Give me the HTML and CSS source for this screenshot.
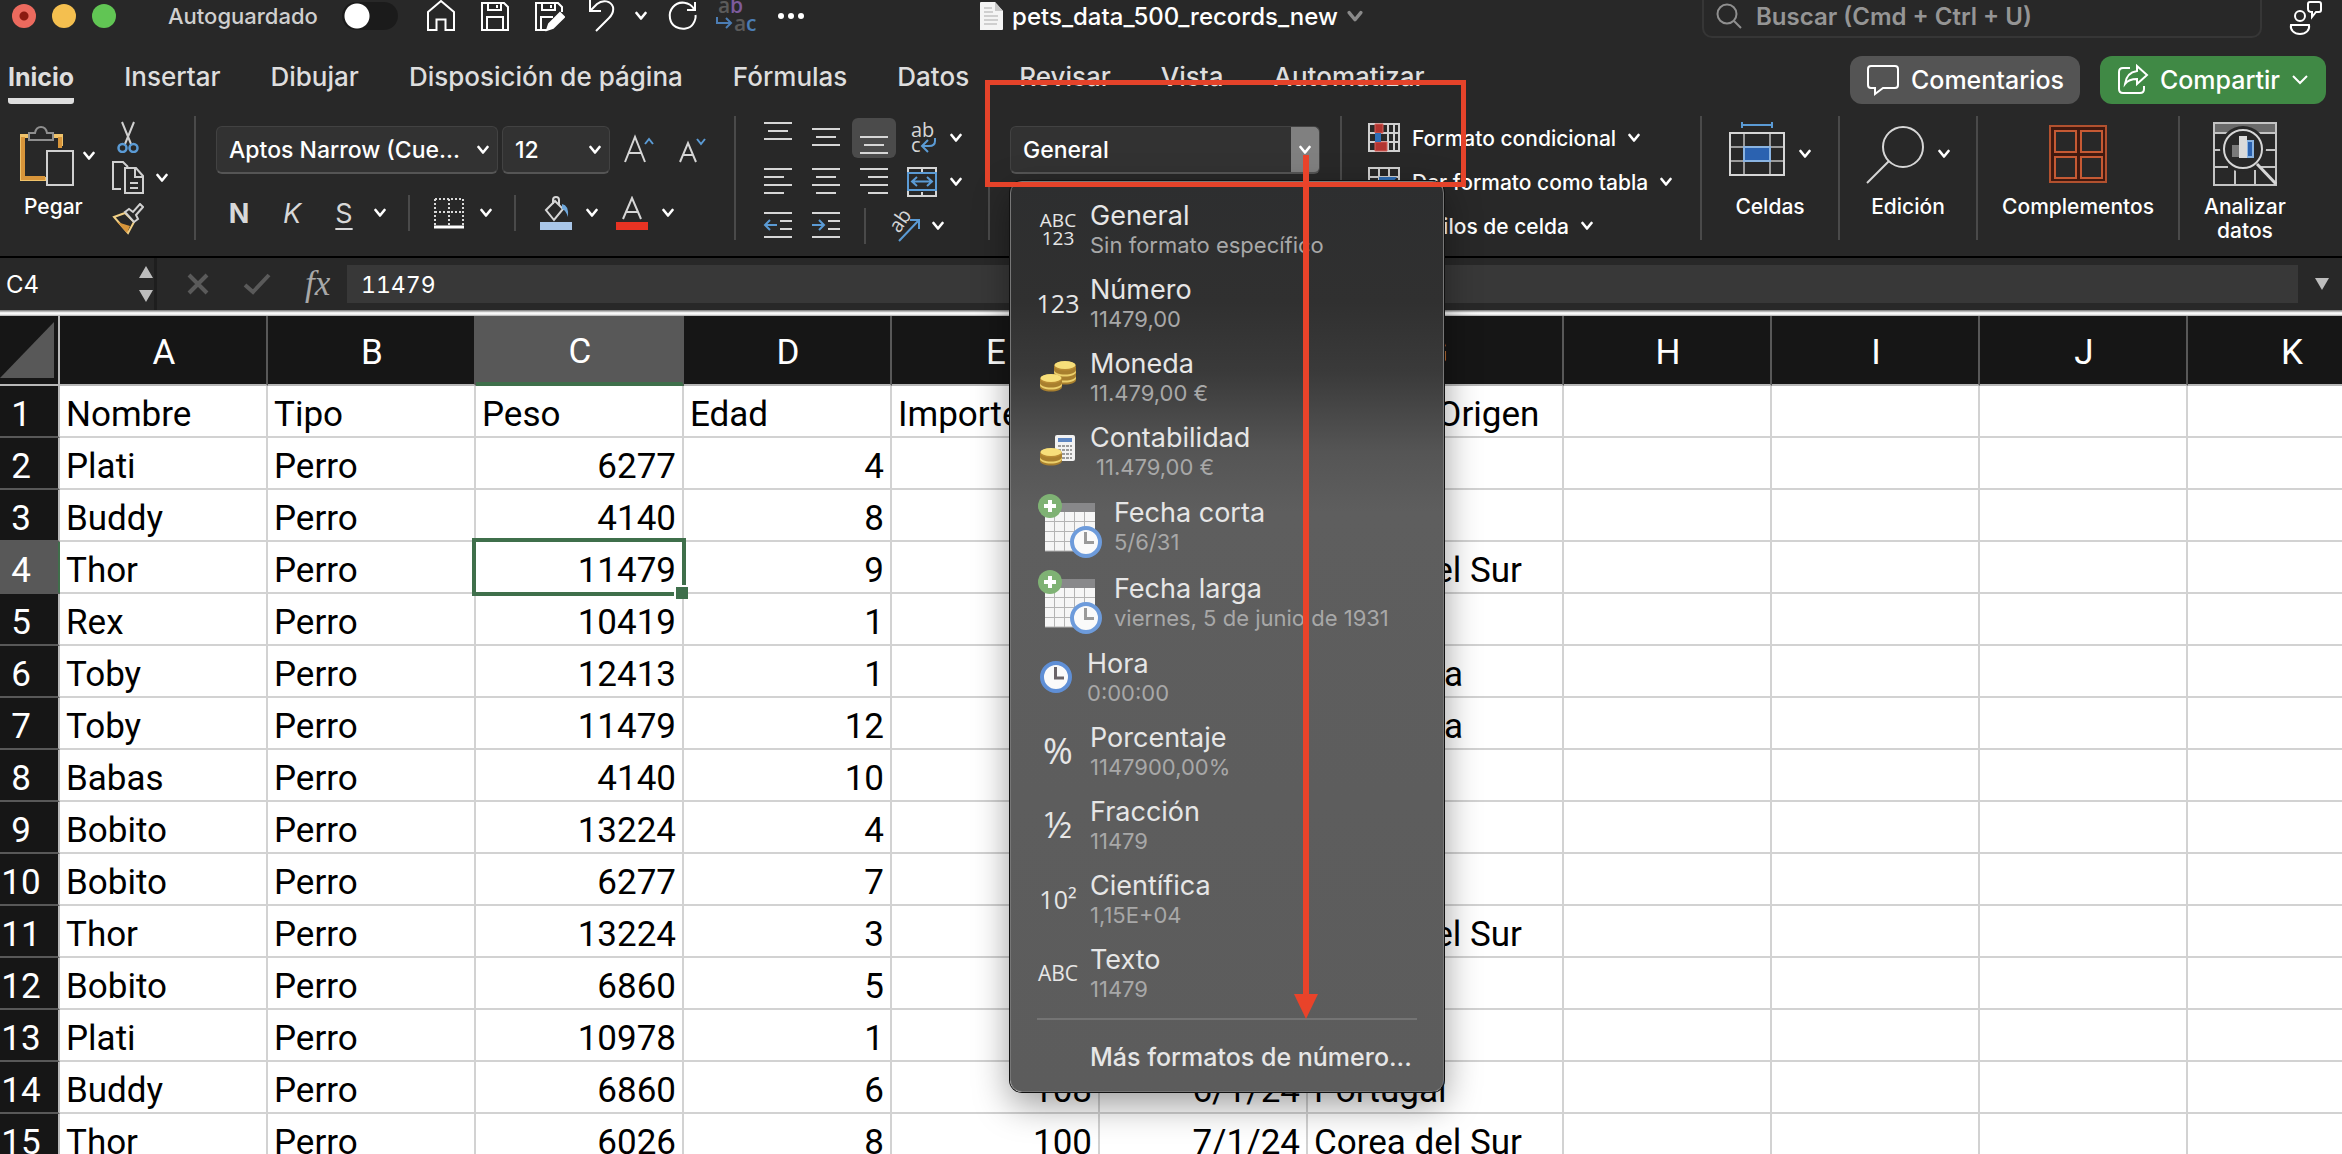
FILE: index.html
```html
<!DOCTYPE html>
<html lang="es">
<head>
<meta charset="utf-8">
<title>pets_data_500_records_new</title>
<link rel="stylesheet" href="styles.css">
</head>
<body>
<svg class="defs" aria-hidden="true">
  <defs>
    <symbol id="chev" viewBox="0 0 12 10"><path d="M1.5 2 6 7.5 10.500 2" fill="none" stroke="currentColor" stroke-width="2.600" stroke-linecap="round" stroke-linejoin="round"/></symbol>
    <symbol id="coins" viewBox="0 0 22 18">
      <path d="M0 6v7c0 2.500 5 4.500 11 4.500S22 15.500 22 13V6z" fill="#a87f2e"/>
      <path d="M0 9c0 2.500 5 4.500 11 4.500S22 11.500 22 9v2c0 2.500-5 4.500-11 4.500S0 13.500 0 11z" fill="#ecd06c"/>
      <ellipse cx="11" cy="5" rx="11" ry="4.500" fill="#b98c34"/><ellipse cx="11" cy="4" rx="10.500" ry="4" fill="#f7df7a"/>
    </symbol>
    <symbol id="clock" viewBox="0 0 32 32">
      <circle cx="16" cy="16" r="14" fill="#fafafa" stroke="#5f8fd6" stroke-width="4"/>
      <path d="M15.500 6v11H24" fill="none" stroke="#6a6468" stroke-width="3"/>
    </symbol>
    <symbol id="calendar" viewBox="0 0 64 64">
      <rect x="7" y="9" width="50" height="48" fill="#f6f6f6"/><rect x="7" y="9" width="50" height="9" fill="#88888a"/>
      <path d="M7 27.500h50M7 37.500h50M7 47.500h50M16.500 18v39M26.500 18v39M36.500 18v39M46.500 18v39M7 57h50" stroke="#b4b4b4" fill="none"/>
      <circle cx="12" cy="12" r="12" fill="#7fb274"/><path d="M12 6v12M6 12h12" stroke="#fff" stroke-width="4"/>
      <circle cx="48" cy="48" r="14" fill="#fafafa" stroke="#6d9bdb" stroke-width="4"/>
      <path d="M47.500 38v10.500H56" fill="none" stroke="#9a9a9a" stroke-width="3"/>
    </symbol>
  </defs>
</svg>

<header class="titlebar">
  <div class="title-left">
    <div class="lights"><span class="light red"></span><span class="light yellow"></span><span class="light green"></span></div>
    <label class="autosave">Autoguardado <input type="checkbox" role="switch" class="switch"></label>
    <div class="quick">
      <button aria-label="Inicio"><svg width="32" height="32" viewBox="0 0 32 32"><path d="M3 12 16 1l13 11v18h-8.500V19.500h-9V30H3z"/></svg></button>
      <button aria-label="Guardar"><svg width="32" height="32" viewBox="0 0 32 32"><path d="M3 3h22l4 4v23H3zM9 3v7h13V3M8 30V17h16v13M18 5v3"/></svg></button>
      <button aria-label="Guardar como"><svg width="32" height="32" viewBox="0 0 32 32"><path d="M14 30H3V3h22l4 4v5M9 3v7h13V3M8 30V17h12M18 5v3"/><path d="m14 30 2-6L27 13l4 4-11 11z" fill="#fff"/></svg></button>
      <button aria-label="Deshacer"><svg width="32" height="32" viewBox="0 0 32 32"><path d="M3 0v11h11M3 11 10 4c6-5 14-3 16 3 1 5-1 8-4 11L9 31"/></svg></button>
      <button aria-label="Opciones de deshacer" class="narrow"><svg class="chev"><use href="#chev"/></svg></button>
      <button aria-label="Rehacer"><svg width="32" height="32" viewBox="0 0 32 32"><path d="M28 2v8h-8M27 9C23 2 12 0 6 7s-3 17 3 20 14 2 17-3c2-3 3-6 2.500-9"/></svg></button>
      <button aria-label="Reemplazar" class="wide"><svg width="44" height="38" viewBox="0 0 44 38"><g class="glyphs"><text x="3" y="16" fill="#5b5b5b">a</text><text x="15" y="16" fill="#7d5b9c">b</text><text x="19" y="34" fill="#5b5b5b">a</text><text x="31" y="34" fill="#4c7db4">c</text></g><path d="M2 20v6h13M11 21l5 5-5 5" stroke="#4c7db4"/></svg></button>
      <button aria-label="Más comandos"><svg width="32" height="32" viewBox="0 0 32 32"><g fill="#fff" stroke="none"><circle cx="6" cy="16" r="3"/><circle cx="16" cy="16" r="3"/><circle cx="26" cy="16" r="3"/></g></svg></button>
    </div>
  </div>
  <div class="doc">
    <svg width="24" height="28" viewBox="0 0 24 28"><path d="M1 1a1 1 0 0 1 1-1h14l8 9v18a1 1 0 0 1-1 1H1z" fill="#f4f4f4"/><path d="M16 0v9h8z" fill="#c9c9c9"/><path d="M5 6h8M5 10h9M5 14h14M5 18h14M5 22h13" stroke="#cfcfcf" stroke-width="2"/></svg>
    <span>pets_data_500_records_new</span>
    <svg class="chev doc-chev"><use href="#chev"/></svg>
  </div>
  <div class="title-right">
    <label class="search">
      <svg width="26" height="26" viewBox="0 0 26 26"><circle cx="11" cy="11" r="9.500"/><path d="m18 18 7 7"/></svg>
      <input type="search" aria-label="Buscar" placeholder="Buscar (Cmd + Ctrl + U)">
    </label>
    <button class="presence" aria-label="Personas"><svg width="36" height="36" viewBox="0 0 36 36"><circle cx="12" cy="15" r="5"/><path d="M3 24h18c1 5-3 9-9 9s-10-4-9-9zM20 3c0-1 1-2 2-2h9c1 0 2 1 2 2v6c0 1-1 2-2 2h-3l-4 5v-5c-3 0-4-1-4-3z"/></svg></button>
  </div>
</header>

<nav class="tabs">
  <a href="#" class="active">Inicio</a><a href="#">Insertar</a><a href="#">Dibujar</a><a href="#">Disposición de página</a><a href="#">Fórmulas</a><a href="#">Datos</a><a href="#">Revisar</a><a href="#">Vista</a><a href="#">Automatizar</a>
  <div class="tab-actions">
    <button class="pill comments"><svg width="34" height="32" viewBox="0 0 34 32"><path d="M5 2h24q3 0 3 3v16q0 3-3 3H17l-8 6v-6H5q-3 0-3-3V5q0-3 3-3z"/></svg>Comentarios</button>
    <button class="pill share"><svg width="32" height="32" viewBox="0 0 32 32"><path d="M13 4H6Q2 4 2 8v17q0 4 4 4h17q4 0 4-4v-3"/><path d="M20 2l10 9-10 9v-5c-6 0-9 1-12 5 1-8 5-12 12-13z"/></svg>Compartir<svg width="18" height="12" viewBox="0 0 18 12"><path d="m2 2 7 7 7-7"/></svg></button>
  </div>
</nav>

<section class="ribbon">
  <div class="group clipboard">
    <button class="paste">
      <span class="with-chev"><svg width="54" height="60" viewBox="0 0 54 60"><path d="M41 20V10H2v43h24" fill="none" stroke="#f0c36b" stroke-width="4"/><path d="M40 22V11M3 11v41h22" fill="none" stroke="#d8953a" stroke-width="4"/><path d="M9 14V7h6q1-6 6-6t6 6h6v7z" fill="#282828" stroke="#8f8f8f" stroke-width="2"/><rect x="27" y="25" width="26" height="34" fill="#282828" stroke="#d0d0d0" stroke-width="2"/></svg><svg class="chev"><use href="#chev"/></svg></span>
      <span class="paste-label">Pegar</span>
    </button>
    <div class="stack">
      <button aria-label="Cortar"><svg width="32" height="32" viewBox="0 0 32 32"><path d="M10 1l9 22M22 1l-9 22" stroke="#d0d0d0" stroke-width="2"/><g fill="none" stroke="#5b9bd5" stroke-width="2.500"><circle cx="10.500" cy="27" r="4"/><circle cx="21.500" cy="27" r="4"/></g></svg></button>
      <button aria-label="Copiar"><svg width="32" height="34" viewBox="0 0 32 34"><g fill="none" stroke="#d0d0d0" stroke-width="2"><path d="M9 28H1V1h10l5 5M13 7h11l7 8v17H13zM23 7v9h8M18 22h8M18 27h8"/></g></svg><svg class="chev"><use href="#chev"/></svg></button>
      <button aria-label="Copiar formato"><svg width="32" height="32" viewBox="0 0 32 32"><path d="m2 14 11-4 9 9-6 11z" fill="none" stroke="#f0cf85" stroke-width="2"/><path d="m5 19 13 4-3 7z" fill="#d8953a"/><path d="m13 9 4-3 4 3 7-8 3 3-7 8 2 4-4 3z" fill="#282828" stroke="#d0d0d0" stroke-width="2"/></svg></button>
    </div>
  </div>

  <div class="group font">
    <div class="font-row">
      <span class="combo family"><select aria-label="Fuente"><option>Aptos Narrow (Cue...</option></select><svg class="chev"><use href="#chev"/></svg></span>
      <span class="combo size"><select aria-label="Tamaño"><option>12</option></select><svg class="chev"><use href="#chev"/></svg></span>
      <button aria-label="Aumentar tamaño"><svg width="32" height="32" viewBox="0 0 32 32"><path d="M1 28 11 3l10 25M5 19h12" class="ink"/><path d="m21 10 4-5 4 5" class="blue"/></svg></button>
      <button aria-label="Disminuir tamaño"><svg width="32" height="32" viewBox="0 0 32 32"><path d="m4 28 8-19 8 19M7 21h10" class="ink"/><path d="m21 5 4 5 4-5" class="blue"/></svg></button>
    </div>
    <div class="style-row">
      <button class="bold">N</button><button class="italic">K</button><button class="under">S</button><svg class="chev"><use href="#chev"/></svg>
      <i class="vr"></i>
      <button aria-label="Bordes"><svg width="30" height="32" viewBox="0 0 30 32"><path d="M1 2h28M1 15h28M1 2v26M15 2v26M29 2v26" fill="none" stroke="#d8d8d8" stroke-width="2" stroke-dasharray="2 2"/><path d="M0 30h30" stroke="#fff" stroke-width="3"/></svg></button><svg class="chev"><use href="#chev"/></svg>
      <i class="vr"></i>
      <button aria-label="Color de relleno"><svg width="32" height="34" viewBox="0 0 32 34"><path d="m6 14 9-9 8 8-9 11zM13 8V4q0-3 3-3t3 3v5" class="ink"/><path d="M22 8q7 1 6 13-3-8-6-8z" fill="#6fa8dc"/><path d="M0 26h32v8H0z" fill="#a9c6e8"/></svg></button><svg class="chev"><use href="#chev"/></svg>
      <button aria-label="Color de fuente"><svg width="32" height="34" viewBox="0 0 32 34"><path d="M7 23 16 2l9 21M10 16h12" class="ink"/><path d="M0 26h32v8H0z" fill="#e83323"/></svg></button><svg class="chev"><use href="#chev"/></svg>
    </div>
  </div>

  <div class="group align">
    <div class="align-row">
      <button aria-label="Alinear arriba"><svg width="44" height="40" viewBox="0 0 44 40"><path d="M8 5h28M12 13h20M8 21h28" class="ink"/></svg></button>
      <button aria-label="Alinear en el medio"><svg width="44" height="40" viewBox="0 0 44 40"><path d="M8 11h28M12 19h20M8 27h28" class="ink"/></svg></button>
      <button aria-label="Alinear abajo" class="pressed"><svg width="44" height="40" viewBox="0 0 44 40"><path d="M8 19h28M12 27h20M8 35h28" class="ink"/></svg></button>
      <button aria-label="Ajustar texto"><svg width="32" height="36" viewBox="0 0 32 36"><g class="glyphs light-glyphs"><text x="5" y="17">ab</text><text x="5" y="32">c</text></g><path d="M29 18v3q0 5-6 5h-6M22 20l-6 6 6 6" class="blue"/></svg></button>
      <svg class="chev"><use href="#chev"/></svg>
    </div>
    <div class="align-row">
      <button aria-label="Alinear a la izquierda"><svg width="44" height="40" viewBox="0 0 44 40"><path d="M8 7h28M8 15h20M8 23h28M8 31h20" class="ink"/></svg></button>
      <button aria-label="Centrar"><svg width="44" height="40" viewBox="0 0 44 40"><path d="M8 7h28M12 15h20M8 23h28M12 31h20" class="ink"/></svg></button>
      <button aria-label="Alinear a la derecha"><svg width="44" height="40" viewBox="0 0 44 40"><path d="M8 7h28M16 15h20M8 23h28M16 31h20" class="ink"/></svg></button>
      <button aria-label="Combinar"><svg width="32" height="32" viewBox="0 0 32 32"><path d="M2 2h28v28H2zM16 2v4M16 26v4" class="ink"/><path d="M2 7h28v17H2zM7 15.500h18M11 11l-5 4.500 5 4.500M21 11l5 4.500-5 4.500" class="blue"/></svg></button>
      <svg class="chev"><use href="#chev"/></svg>
    </div>
    <div class="align-row short">
      <button aria-label="Disminuir sangría"><svg width="44" height="40" viewBox="0 0 44 40"><path d="M8 7h28M24 15h12M24 23h12M8 31h28" class="ink"/><path d="M21 19H9M14 14l-5 5 5 5" class="blue"/></svg></button>
      <button aria-label="Aumentar sangría"><svg width="44" height="40" viewBox="0 0 44 40"><path d="M8 7h28M24 15h12M24 23h12M8 31h28" class="ink"/><path d="M8 19h12M15 14l5 5-5 5" class="blue"/></svg></button>
      <i class="vr"></i>
      <button aria-label="Orientación"><svg width="34" height="36" viewBox="0 0 34 36"><g class="glyphs light-glyphs"><text x="0" y="0" transform="translate(12 26) rotate(-55)">ab</text></g><path d="M12 33 32 12M23 12h9v9" class="blue"/></svg></button>
      <svg class="chev"><use href="#chev"/></svg>
    </div>
  </div>

  <div class="group number">
    <span class="combo format"><select aria-label="Formato de número"><option>General</option></select><svg class="chev"><use href="#chev"/></svg></span>
    <div class="menu" role="menu">
      <button role="menuitem"><span class="icon stacked">ABC<br>123</span><span class="txt"><b>General</b><small>Sin formato específico</small></span></button>
      <button role="menuitem"><span class="icon big">123</span><span class="txt"><b>Número</b><small>11479,00</small></span></button>
      <button role="menuitem"><span class="icon"><svg width="38" height="32" viewBox="0 0 38 32"><use href="#coins" x="15" y="6" width="22" height="18"/><use href="#coins" x="15" y="0" width="22" height="18"/><use href="#coins" x="1" y="13" width="22" height="18"/></svg></span><span class="txt"><b>Moneda</b><small>11.479,00 €</small></span></button>
      <button role="menuitem"><span class="icon"><svg width="38" height="32" viewBox="0 0 38 32"><rect x="16" y="0" width="20" height="26" rx="2" fill="#f2f2f2"/><rect x="19" y="3" width="14" height="4" fill="#5d86c2"/><path d="M19 11h14M19 15h14M19 19h14M19 23h14" stroke="#9b9b9b" stroke-width="2" stroke-dasharray="3 1"/><use href="#coins" x="1" y="13" width="22" height="18"/></svg></span><span class="txt"><b>Contabilidad</b><small class="accounting">11.479,00 €</small></span></button>
      <button role="menuitem" class="date"><span class="icon"><svg width="64" height="64"><use href="#calendar"/></svg></span><span class="txt"><b>Fecha corta</b><small>5/6/31</small></span></button>
      <button role="menuitem" class="date"><span class="icon"><svg width="64" height="64"><use href="#calendar"/></svg></span><span class="txt"><b>Fecha larga</b><small>viernes, 5 de junio de 1931</small></span></button>
      <button role="menuitem" class="time"><span class="icon"><svg width="32" height="32"><use href="#clock"/></svg></span><span class="txt"><b>Hora</b><small>0:00:00</small></span></button>
      <button role="menuitem"><span class="icon percent">%</span><span class="txt"><b>Porcentaje</b><small>1147900,00%</small></span></button>
      <button role="menuitem"><span class="icon percent">½</span><span class="txt"><b>Fracción</b><small>11479</small></span></button>
      <button role="menuitem"><span class="icon big">10²</span><span class="txt"><b>Científica</b><small>1,15E+04</small></span></button>
      <button role="menuitem"><span class="icon abc">ABC</span><span class="txt"><b>Texto</b><small>11479</small></span></button>
      <hr>
      <button role="menuitem" class="more"><span class="icon"></span><b>Más formatos de número...</b></button>
    </div>
  </div>

  <div class="group styles">
    <button><svg width="32" height="30" viewBox="0 0 32 30"><path d="M1 1h30v27H1zM1 10h30M1 19h30M10 1v27M20 1v27M26 1v27" fill="none" stroke="#d0d0d0" stroke-width="2"/><path d="M7 1h8v9H7zM7 19h12v9H7z" fill="#b23430" stroke="#d4605b" stroke-width="1"/><path d="M7 10h6v9H7z" fill="#2f6fb8"/></svg>Formato condicional<svg class="chev"><use href="#chev"/></svg></button>
    <button><svg width="32" height="30" viewBox="0 0 32 30"><path d="M1 1h30v27H1zM1 10h30M1 19h30M11 1v27M21 1v27" fill="none" stroke="#d0d0d0" stroke-width="2"/><path d="M11 10h18L18 24h-7z" fill="#2f6fb8"/></svg>Dar formato como tabla<svg class="chev"><use href="#chev"/></svg></button>
    <button><svg width="32" height="30" viewBox="0 0 32 30"><path d="M1 1h30v27H1zM1 10h30M1 19h30" fill="none" stroke="#d0d0d0" stroke-width="2"/></svg>Estilos de celda<svg class="chev"><use href="#chev"/></svg></button>
  </div>

  <div class="group tall cells"><button>
    <span class="with-chev"><svg width="56" height="64" viewBox="0 0 56 64"><path d="M13 3h30M13 0v6M43 0v6" class="blue"/><path d="M15 11v42M41 11v42M1 25h54M1 39h54" fill="none" stroke="#9a9a9a" stroke-width="2"/><path d="M1 11h54v42H1z" class="ink"/><path d="M15 25h26v14H15z" fill="#2b62b0" stroke="#8ab4e2" stroke-width="2"/></svg><svg class="chev"><use href="#chev"/></svg></span>Celdas</button></div>
  <div class="group tall cells"><button>
    <span class="with-chev"><svg width="58" height="64" viewBox="0 0 58 64"><circle cx="37" cy="25" r="20" class="ink"/><path d="M1 61l22-22" class="ink"/></svg><svg class="chev"><use href="#chev"/></svg></span>Edición</button></div>
  <div class="group tall addins"><button>
    <svg width="58" height="64" viewBox="0 0 58 64"><path d="M1 4h56v56H1z" fill="#41190f" stroke="#b2512f" stroke-width="2"/><path d="M6 9h21v21H6zM32 9h21v21H32zM6 35h21v21H6zM32 35h21v21H32z" fill="#282828" stroke="#c65a34" stroke-width="2"/></svg>Complementos</button></div>
  <div class="group tall analyze"><button>
    <svg width="64" height="64" viewBox="0 0 64 64"><path d="M2 2h60v8H2z" fill="#6a6a6a"/><path d="M1 1h62v62H1zM1 11h62M1 28h8M50 28h12M1 45h14M46 45h16M22 48v14M42 48v14" fill="none" stroke="#c4c4c4" stroke-width="2"/><circle cx="30" cy="27" r="23" fill="#282828"/><circle cx="30" cy="27" r="19" class="ink"/><path d="m44 42 19 20" stroke="#d6d6d6" stroke-width="3"/><path d="M19 23h8v12h-8z" fill="#7a7a7a"/><path d="M34 19h6v16h-6z" fill="#2b62b0" stroke="#8ab4e2" stroke-width="2"/><path d="M26 14h8v22h-8z" fill="#dadada"/></svg>Analizar<br>datos</button></div>
</section>

<section class="formula-bar">
  <input class="name-box" aria-label="Cuadro de nombres" value="C4">
  <svg class="stepper" width="14" height="36" viewBox="0 0 14 36"><path d="M0 12 7 0l7 12zM0 24h14L7 36z" fill="#bdbdbd"/></svg>
  <div class="fx">
    <button aria-label="Cancelar"><svg width="22" height="22" viewBox="0 0 22 22"><path d="m2 2 18 18M20 2 2 20" stroke="#5a5a5a" stroke-width="4"/></svg></button>
    <button aria-label="Aceptar"><svg width="28" height="22" viewBox="0 0 28 22"><path d="m2 12 8 7L26 2" fill="none" stroke="#5a5a5a" stroke-width="4"/></svg></button>
    <button class="fx-label">fx</button>
  </div>
  <input class="formula" aria-label="Fórmula" value="11479">
  <button class="expand" aria-label="Expandir"><svg width="14" height="12" viewBox="0 0 14 12"><path d="M0 0h14L7 12z" fill="#bdbdbd"/></svg></button>
</section>

<main class="sheet">
  <table>
    <colgroup><col class="c-head"><col><col><col><col><col><col><col class="c-wide"><col><col><col><col></colgroup>
    <thead><tr><th class="corner"><svg width="54" height="56" viewBox="0 0 54 56"><path d="M54 0v56H0z" fill="#585858"/></svg></th><th>A</th><th>B</th><th class="sel">C</th><th>D</th><th>E</th><th>F</th><th>G</th><th>H</th><th>I</th><th>J</th><th>K</th></tr></thead>
    <tbody>
      <tr><th>1</th><td>Nombre</td><td>Tipo</td><td>Peso</td><td>Edad</td><td>Importe</td><td></td><td>País de Origen</td><td></td><td></td><td></td><td></td></tr>
      <tr><th>2</th><td>Plati</td><td>Perro</td><td class="n">6277</td><td class="n">4</td><td></td><td></td><td></td><td></td><td></td><td></td><td></td></tr>
      <tr><th>3</th><td>Buddy</td><td>Perro</td><td class="n">4140</td><td class="n">8</td><td></td><td></td><td></td><td></td><td></td><td></td><td></td></tr>
      <tr><th class="sel">4</th><td>Thor</td><td>Perro</td><td class="n cursor">11479</td><td class="n">9</td><td></td><td></td><td>Corea del Sur</td><td></td><td></td><td></td><td></td></tr>
      <tr><th>5</th><td>Rex</td><td>Perro</td><td class="n">10419</td><td class="n">1</td><td></td><td></td><td></td><td></td><td></td><td></td><td></td></tr>
      <tr><th>6</th><td>Toby</td><td>Perro</td><td class="n">12413</td><td class="n">1</td><td></td><td></td><td>Colombia</td><td></td><td></td><td></td><td></td></tr>
      <tr><th>7</th><td>Toby</td><td>Perro</td><td class="n">11479</td><td class="n">12</td><td></td><td></td><td>Colombia</td><td></td><td></td><td></td><td></td></tr>
      <tr><th>8</th><td>Babas</td><td>Perro</td><td class="n">4140</td><td class="n">10</td><td></td><td></td><td></td><td></td><td></td><td></td><td></td></tr>
      <tr><th>9</th><td>Bobito</td><td>Perro</td><td class="n">13224</td><td class="n">4</td><td></td><td></td><td></td><td></td><td></td><td></td><td></td></tr>
      <tr><th>10</th><td>Bobito</td><td>Perro</td><td class="n">6277</td><td class="n">7</td><td></td><td></td><td></td><td></td><td></td><td></td><td></td></tr>
      <tr><th>11</th><td>Thor</td><td>Perro</td><td class="n">13224</td><td class="n">3</td><td></td><td></td><td>Corea del Sur</td><td></td><td></td><td></td><td></td></tr>
      <tr><th>12</th><td>Bobito</td><td>Perro</td><td class="n">6860</td><td class="n">5</td><td></td><td></td><td></td><td></td><td></td><td></td><td></td></tr>
      <tr><th>13</th><td>Plati</td><td>Perro</td><td class="n">10978</td><td class="n">1</td><td></td><td></td><td></td><td></td><td></td><td></td><td></td></tr>
      <tr><th>14</th><td>Buddy</td><td>Perro</td><td class="n">6860</td><td class="n">6</td><td class="n">108</td><td class="n">6/1/24</td><td>Portugal</td><td></td><td></td><td></td><td></td></tr>
      <tr><th>15</th><td>Thor</td><td>Perro</td><td class="n">6026</td><td class="n">8</td><td class="n">100</td><td class="n">7/1/24</td><td>Corea del Sur</td><td></td><td></td><td></td><td></td></tr>
    </tbody>
  </table>
</main>

<div class="callout"></div>
<svg class="arrow" width="24" height="864" viewBox="0 0 24 864"><path d="M9 0h6v842H9z"/><path d="M0 839h24l-12 25z"/></svg>
</body>
</html>
```
FILE: styles.css
```css
* { box-sizing: border-box; }

body {
  margin: 0;
  height: 100vh;
  overflow: hidden;
  position: relative;
  display: flex;
  flex-direction: column;
  background: #282828;
  color: #fff;
  font-family: Inter, "Liberation Sans", sans-serif;
}

button, input, select {
  font: inherit;
  color: inherit;
  background: none;
  border: 0;
  margin: 0;
  padding: 0;
  outline: 0;
}

button {
  display: flex;
  align-items: center;
  justify-content: center;
  white-space: nowrap;
}

svg { display: block; flex: none; }
.defs { position: absolute; width: 0; height: 0; }
.chev { width: 12px; height: 10px; }
.ink { fill: none; stroke: #d6d6d6; stroke-width: 2; }
.blue { fill: none; stroke: #5b9bd5; stroke-width: 2; }
.glyphs { font-size: 21px; font-weight: 600; font-family: "Open Sans", sans-serif; stroke: none; }
.light-glyphs { fill: #d6d6d6; font-size: 20px; font-weight: 400; }

/* Title bar */
.titlebar {
  flex: none;
  height: 44px;
  display: grid;
  grid-template-columns: 1fr auto 1fr;
  align-items: start;
}
.title-left { display: flex; height: 32px; align-items: center; padding-left: 12px; }
.lights { display: flex; gap: 16px; }
.light { width: 24px; height: 24px; border-radius: 50%; }
.red { background: radial-gradient(circle, #8c1a10 4px, #ec6a5e 5px); }
.yellow { background: #f4bf4f; }
.green { background: #61c554; }
.autosave {
  display: flex;
  align-items: center;
  gap: 24px;
  margin-left: 52px;
  font-size: 22px;
  font-weight: 500;
  color: #cfcfcf;
}
.switch {
  appearance: none;
  width: 56px;
  height: 28px;
  border-radius: 14px;
  background: radial-gradient(circle at 15px 14px, #fff 12px, #1b1b1b 13px);
}
.quick { display: flex; align-items: center; margin-left: 27px; gap: 22px; height: 32px; }
.quick button { width: 32px; }
.quick .narrow { width: 12px; margin: 0 -2px 0 -6px; }
.quick .wide { width: 44px; margin: 0 -6px; }
.quick svg, .search svg, .presence svg, .pill svg { fill: none; stroke: #fff; stroke-width: 2; }
.quick .glyphs { stroke: none; }
.doc { display: flex; align-items: center; gap: 9px; height: 32px; font-size: 24px; font-weight: 500; }
.doc-chev { color: #8a8a8a; width: 16px; height: 13px; }
.title-right { display: flex; justify-content: flex-end; }
.search {
  display: flex;
  align-items: center;
  gap: 14px;
  width: 560px;
  height: 38px;
  padding: 0 12px 4px;
  border: 2px solid #363636;
  border-top: 0;
  border-radius: 0 0 10px 10px;
}
.search svg { stroke: #8f8f8f; }
.search input { flex: 1; font-size: 24px; font-weight: 600; }
.search input::placeholder { color: #959595; opacity: 1; }
.presence { margin: 0 18px 0 26px; }

/* Tabs */
.tabs { flex: none; display: flex; height: 60px; padding: 12px 16px 0 8px; gap: 50px; }
.tabs a {
  height: 48px;
  line-height: 42px;
  color: #dedede;
  text-decoration: none;
  font-size: 26px;
  font-weight: 500;
  white-space: nowrap;
}
.tabs .active { font-size: 25px; font-weight: 700; border-bottom: 6px solid #dedede; border-radius: 3px; }
.tab-actions { display: flex; gap: 20px; margin-left: auto; }
.pill { height: 48px; border-radius: 12px; font-size: 25px; font-weight: 500; }
.comments { width: 230px; background: #545454; gap: 11px; }
.share { width: 226px; background: #408945; gap: 11px; }

/* Ribbon */
.ribbon {
  flex: none;
  display: flex;
  height: 154px;
  padding-top: 12px;
  border-bottom: 2px solid #000;
  font-size: 21px;
  font-weight: 500;
}
.group { flex: none; height: 124px; border-right: 2px solid #4a4a4a; position: relative; }
.with-chev { display: flex; align-items: center; gap: 14px; }
.vr { width: 2px; height: 36px; background: #4a4a4a; }

.clipboard { width: 196px; display: flex; padding-left: 20px; }
.paste { flex-direction: column; justify-content: flex-start; align-items: flex-start; width: 92px; padding-top: 10px; gap: 9px; }
.paste .with-chev { gap: 9px; }
.paste-label { line-height: 24px; padding-left: 4px; }
.stack button { height: 44px; gap: 12px; }
.stack { display: flex; flex-direction: column; align-items: flex-start; }

.combo { position: relative; display: block; height: 48px; }
.combo select {
  appearance: none;
  width: 100%;
  height: 48px;
  padding: 0 12px;
  background: #323232;
  border: 1px solid #424242;
  border-bottom: 2px solid #555;
  border-radius: 6px;
  font-size: 23px;
}
.combo .chev { position: absolute; right: 9px; top: 19px; pointer-events: none; }
.font { width: 540px; padding: 10px 0 0 20px; display: flex; flex-direction: column; gap: 17px; }
.font-row { display: flex; align-items: center; gap: 4px; }
.family { width: 282px; }
.size { width: 108px; }
.font-row button { margin-left: 10px; width: 38px; justify-content: flex-start; }
.style-row {
  display: grid;
  grid-template-columns: 46px 60px 44px 28px 30px 50px 24px 34px 48px 24px 56px 16px;
  justify-items: center;
  align-items: center;
  height: 44px;
  font-size: 27px;
  color: #d8d8d8;
}
.bold { font-weight: 700; }
.italic { font-style: italic; font-weight: 400; }
.under { font-weight: 400; text-decoration: underline; text-underline-offset: 5px; }
.style-row .chev, .align-row .chev { color: #fff; }

.align { width: 254px; padding-left: 18px; }
.align-row {
  display: grid;
  grid-template-columns: 48px 48px 48px 48px 20px;
  justify-items: center;
  align-items: center;
  height: 44px;
}
.align-row.short { grid-template-columns: 48px 48px 30px 48px 20px; }
.pressed { background: #4b4b4b; border-radius: 6px; }

.number { width: 352px; padding: 10px 0 0 20px; }
.format { width: 310px; }
.format select { background: linear-gradient(90deg, #323232 280px, #808080 280px); }

.styles { width: 360px; padding-left: 26px; }
.styles button { height: 44px; gap: 12px; }

.tall button { flex-direction: column; justify-content: flex-start; width: 100%; padding-top: 6px; line-height: 24px; white-space: normal; }
.tall button > svg, .tall .with-chev { margin-bottom: 9px; }
.cells { width: 138px; }
.addins { width: 202px; }
.analyze { width: 130px; border-right: 0; }

/* Number format menu */
.menu {
  position: absolute;
  z-index: 5;
  top: 65px;
  left: 20px;
  width: 434px;
  padding: 10px 0 18px;
  border: 1px solid #777;
  border-radius: 12px;
  background: linear-gradient(#2d2e2f 0, #303030 120px, #3a3a3a 190px, #555 270px, #5e5e5e 330px, #5c5c5c 100%);
  box-shadow: 0 0 0 1px #111, 0 12px 36px rgba(0, 0, 0, .4);
  font-weight: 400;
}
.menu button { width: 100%; height: 74px; padding: 0 16px 0 25px; justify-content: flex-start; text-align: left; gap: 10px; color: #e6e6e6; }
.menu .date { height: 76px; gap: 12px; padding-left: 27px; }
.menu .time { gap: 15px; padding-left: 29px; }
.icon { width: 44px; flex: none; display: flex; justify-content: center; text-align: center; font-family: "Open Sans", sans-serif; }
.date .icon { width: 64px; }
.time .icon { width: 32px; }
.stacked { font-size: 19px; line-height: 18px; }
.icon.big { font-size: 25px; }
.icon.percent { font-size: 36px; line-height: 40px; }
.icon.abc { font-size: 21px; }
.txt { display: flex; flex-direction: column; }
.menu b { font-weight: 400; font-size: 27px; line-height: 32px; }
.menu small { font-size: 22px; line-height: 26px; color: #a8a8a8; }
.menu .accounting { padding-left: 6px; }
.menu hr { margin: 8px 26px 0; border: 0; height: 2px; background: #747474; }
.menu .more { height: 32px; margin-top: 21px; }
.menu .more b { font-size: 25px; font-weight: 500; }

/* Formula bar */
.formula-bar { flex: none; display: flex; align-items: center; height: 52px; padding-right: 13px; font-size: 24px; }
.name-box { width: 139px; padding-left: 6px; height: 52px; }
.stepper { margin-right: 1px; }
.fx { display: flex; align-items: center; gap: 34px; height: 52px; border-left: 3px solid #1e1e1e; padding-left: 30px; width: 193px; }
.fx-label { font-family: "Liberation Serif", serif; font-style: italic; font-size: 35px; color: #a8a8a8; }
.formula { flex: 1; height: 38px; padding: 2px 0 0 14px; background: #383838; font-size: 23px; font-variant-numeric: tabular-nums; }
.expand { margin-left: 17px; }

/* Sheet */
.sheet {
  flex: 1;
  min-height: 0;
  overflow: hidden;
  padding-top: 6px;
  background: linear-gradient(#8a8a8a 1px, #e6e6e6 2px, #fff 4px, #aaa 6px, #fff 6px);
  color: #000;
  font-family: Roboto, "Liberation Sans", sans-serif;
}
table { table-layout: fixed; width: 2396px; border-collapse: separate; border-spacing: 0; }
col { width: 208px; }
.c-head { width: 60px; }
.c-wide { width: 256px; }
td, th {
  height: 52px;
  padding: 8px 6px 0;
  border-right: 2px solid #d2d2d2;
  border-bottom: 2px solid #d2d2d2;
  font-size: 35px;
  line-height: 40px;
  text-align: left;
  white-space: nowrap;
  font-weight: 400;
}
th { background: #161616; color: #fff; text-align: center; border-color: #585858; }
tbody th { padding: 8px 16px 0 0; border-right-color: #b8b8b8; }
thead th { height: 70px; padding: 6px 0 0 2px; border-bottom-color: #b8b8b8; }
thead .corner { padding: 0; border-right-color: #b8b8b8; }
.n { text-align: right; }
th.sel { background: #585858; }
thead th.sel { border-bottom: 4px solid #3f6f4b; }
tbody th.sel { border-right-color: #3f6f4b; }
.cursor { position: relative; }
.cursor::before { content: ""; position: absolute; inset: -4px; border: 4px solid #3f6f4b; }
.cursor::after { content: ""; position: absolute; right: -6px; bottom: -7px; width: 12px; height: 12px; background: #3f6f4b; border: solid #fff; border-width: 2px 0 0 2px; }

/* Annotation */
.callout { position: absolute; z-index: 10; left: 985px; top: 80px; width: 481px; height: 107px; border: 5px solid #e5432a; }
.arrow { position: absolute; z-index: 10; left: 1294px; top: 155px; fill: #e9432a; }
```
